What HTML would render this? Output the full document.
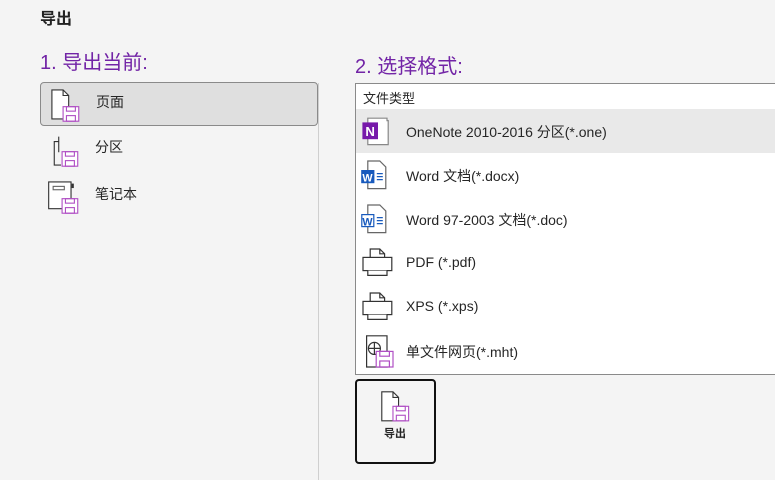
<!DOCTYPE html>
<html><head><meta charset="utf-8"><style>
*{margin:0;padding:0;box-sizing:border-box}
body{width:775px;height:480px;background:#f4f4f4;font-family:"Liberation Sans","Noto Sans CJK SC",sans-serif;color:#262626;position:relative;overflow:hidden}
.a{position:absolute}
h1{position:absolute;left:40px;top:5px;font-size:16px;font-weight:bold;color:#222}
.h2{position:absolute;font-size:20px;color:#7224a6}
.item{position:absolute;left:40px;width:278px;height:44px;font-size:14px}
.item span{position:absolute;left:55px;top:9px}
.item svg{position:absolute;left:7px;top:3px}
.sel{background:#dfdfdf;border:1px solid #8a8a8a;border-radius:4px}
.div{position:absolute;left:318px;top:83px;width:1px;height:397px;background:#cfcfcf}
.list{position:absolute;left:355px;top:83px;width:425px;height:292px;background:#fff;border:1px solid #8a8a8a}
.row{position:absolute;left:0;width:100%;height:44px;font-size:14px}
.row span{position:absolute;left:50px;top:13px}
.row svg{position:absolute;left:4px;top:5px}
.btn{position:absolute;left:355px;top:379px;width:81px;height:85px;border:2px solid #111;border-radius:4px;background:#f4f4f4}
</style></head><body>
<h1>导出</h1>
<div class="h2" style="left:40px;top:46px">1. 导出当前:</div>
<div class="h2" style="left:355px;top:50px">2. 选择格式:</div>
<div class="div"></div>
<div class="item sel" style="top:82px">
<svg width="38" height="38" viewBox="0 0 34 34"><path d="M3.5 3.5h10l5 5v21h-15z" fill="#fff" stroke="#333"/><path d="M13.5 3.5v5h5" fill="none" stroke="#333"/><rect x="13.5" y="18.5" width="14" height="13" fill="#fff" stroke="#b04fc4"/><rect x="16.5" y="18.5" width="8" height="4" fill="none" stroke="#b04fc4"/><rect x="16.5" y="26.5" width="8" height="5" fill="none" stroke="#b04fc4"/></svg>
<span>页面</span></div>
<div class="item" style="top:128px">
<svg width="38" height="38" viewBox="0 0 34 34"><path d="M10.5 9.5h-4v21h6M10.5 5v14" fill="none" stroke="#333"/><rect x="13.5" y="18.5" width="14" height="13" fill="#fff" stroke="#b04fc4"/><rect x="16.5" y="18.5" width="8" height="4" fill="none" stroke="#b04fc4"/><rect x="16.5" y="26.5" width="8" height="5" fill="none" stroke="#b04fc4"/></svg>
<span>分区</span></div>
<div class="item" style="top:175px">
<svg width="38" height="38" viewBox="0 0 34 34"><path d="M1.5 3.5h20v24h-20z" fill="#fff" stroke="#333"/><rect x="5.5" y="7.5" width="10" height="3" fill="none" stroke="#666"/><rect x="22" y="5" width="2" height="4" fill="#333"/><rect x="13.5" y="18.5" width="14" height="13" fill="#fff" stroke="#b04fc4"/><rect x="16.5" y="18.5" width="8" height="4" fill="none" stroke="#b04fc4"/><rect x="16.5" y="26.5" width="8" height="5" fill="none" stroke="#b04fc4"/></svg>
<span>笔记本</span></div>
<div class="list">
<div class="a" style="left:7px;top:4px;font-size:13px">文件类型</div>
<div class="row" style="top:25px;background:#e9e9e9">
<svg width="36" height="36" viewBox="0 0 30 30"><path d="M6.5 3.5h16v2h1v20h-17z" fill="#fff" stroke="#888"/><rect x="2" y="7" width="13" height="14" fill="#7719aa"/><text x="4.5" y="18.5" font-size="11" font-weight="bold" fill="#fff" font-family="Liberation Sans">N</text></svg>
<span>OneNote 2010-2016 分区(*.one)</span></div>
<div class="row" style="top:69px">
<svg width="36" height="36" viewBox="0 0 30 30"><path d="M6.5 2.5h10l5 5v18h-15z" fill="#fff" stroke="#666"/><rect x="1" y="10" width="11" height="11" fill="#185abd"/><text x="2" y="19.5" font-size="9" font-weight="bold" fill="#fff" font-family="Liberation Sans">W</text><path d="M14 13h5M14 15.5h5M14 18h5" stroke="#185abd"/></svg>
<span>Word 文档(*.docx)</span></div>
<div class="row" style="top:113px">
<svg width="36" height="36" viewBox="0 0 30 30"><path d="M6.5 2.5h10l5 5v18h-15z" fill="#fff" stroke="#666"/><rect x="1.5" y="10.5" width="10" height="10" fill="#fff" stroke="#185abd"/><text x="2" y="19.5" font-size="9" font-weight="bold" fill="#185abd" font-family="Liberation Sans">W</text><path d="M14 13h5M14 15.5h5M14 18h5" stroke="#185abd"/></svg>
<span>Word 97-2003 文档(*.doc)</span></div>
<div class="row" style="top:157px">
<svg width="36" height="36" viewBox="0 0 30 30"><path d="M8.5 9.5v-7h8l4 4v3" fill="#fff" stroke="#333"/><path d="M16.5 2.5v4h4" fill="none" stroke="#333"/><rect x="2.5" y="9.5" width="24" height="11" fill="#fff" stroke="#333"/><path d="M6.5 20.5v4h16v-4" fill="#fff" stroke="#333"/></svg>
<span>PDF (*.pdf)</span></div>
<div class="row" style="top:201px">
<svg width="36" height="36" viewBox="0 0 30 30"><path d="M8.5 9.5v-7h8l4 4v3" fill="#fff" stroke="#333"/><path d="M16.5 2.5v4h4" fill="none" stroke="#333"/><rect x="2.5" y="9.5" width="24" height="11" fill="#fff" stroke="#333"/><path d="M6.5 20.5v4h16v-4" fill="#fff" stroke="#333"/></svg>
<span>XPS (*.xps)</span></div>
<div class="row" style="top:245px">
<svg width="36" height="36" viewBox="0 0 30 30"><path d="M5.5 1.5h17v26h-17z" fill="#fff" stroke="#333"/><circle cx="12" cy="12" r="5" fill="none" stroke="#333"/><path d="M7 12h10M12 7v10" stroke="#333"/><rect x="13.5" y="14.5" width="14" height="13" fill="#fff" stroke="#b04fc4"/><rect x="16.5" y="14.5" width="8" height="4" fill="none" stroke="#b04fc4"/><rect x="16.5" y="22.5" width="8" height="5" fill="none" stroke="#b04fc4"/></svg>
<span>单文件网页(*.mht)</span></div>
</div>
<div class="btn">
<svg class="a" style="left:22px;top:8px" width="38" height="38" viewBox="0 0 34 34"><path d="M2.5 2.5h10l5 5v21h-15z" fill="#fff" stroke="#333"/><path d="M12.5 2.5v5h5" fill="none" stroke="#333"/><rect x="12.5" y="15.5" width="14" height="13" fill="#fff" stroke="#b04fc4"/><rect x="15.5" y="15.5" width="8" height="4" fill="none" stroke="#b04fc4"/><rect x="15.5" y="23.5" width="8" height="5" fill="none" stroke="#b04fc4"/></svg>
<div class="a" style="left:27px;top:44px;font-size:11px;font-weight:bold">导出</div>
</div>
</body></html>
